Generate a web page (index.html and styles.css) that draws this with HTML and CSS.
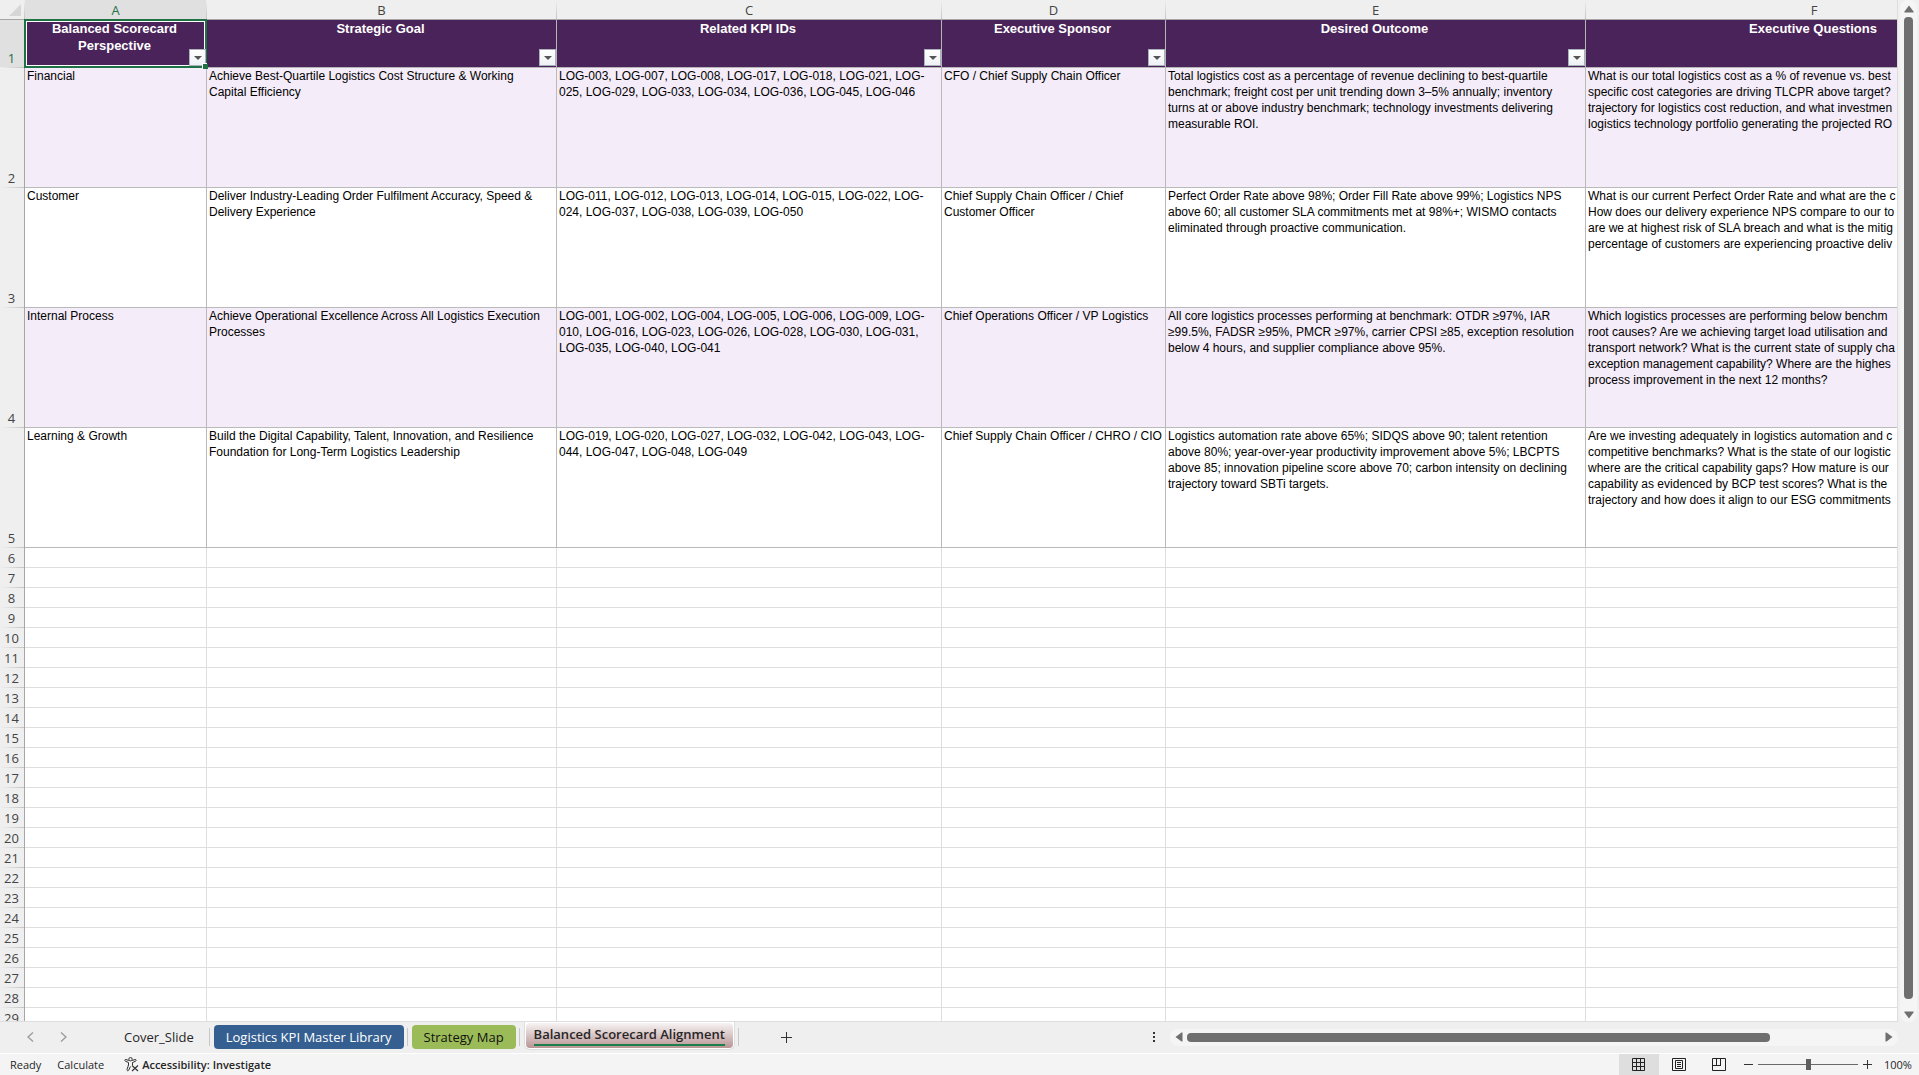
FILE: index.html
```html
<!DOCTYPE html>
<html lang="en">
<head>
    <meta charset="UTF-8">
    <meta name="viewport" content="width=device-width, initial-scale=1.0">
    <title>Balanced Scorecard Alignment</title>
    <link rel="stylesheet" href="styles.css">
</head>
<body>
    <main class="workspace">
        <div class="grid">
            <table class="sheet">
                <colgroup>
                    <col class="col-num">
                    <col class="col-a">
                    <col class="col-b">
                    <col class="col-c">
                    <col class="col-d">
                    <col class="col-e">
                    <col class="col-f">
                </colgroup>
                <thead>
                    <tr class="letters">
                        <th class="corner"><svg width="12" height="12" viewBox="0 0 12 12"><path d="M12 0v12H0z" fill="#d6d6d6"/></svg></th>
                        <th class="selected">A</th>
                        <th>B</th>
                        <th>C</th>
                        <th>D</th>
                        <th>E</th>
                        <th>F</th>
                    </tr>
                </thead>
                <tbody id="rows">
                    <tr class="titles">
                        <th class="num selected">1</th>
                        <td class="active-cell">Balanced Scorecard<br>Perspective<button class="filter" aria-label="Filter perspective"></button><span class="handle"></span></td>
                        <td>Strategic Goal<button class="filter" aria-label="Filter goal"></button></td>
                        <td>Related KPI IDs<button class="filter" aria-label="Filter KPI IDs"></button></td>
                        <td>Executive Sponsor<button class="filter" aria-label="Filter sponsor"></button></td>
                        <td>Desired Outcome<button class="filter" aria-label="Filter outcome"></button></td>
                        <td>Executive Questions</td>
                    </tr>
                    <tr class="data tinted">
                        <th class="num">2</th>
                        <td>Financial</td>
                        <td>Achieve Best-Quartile Logistics Cost Structure &amp; Working<br>Capital Efficiency</td>
                        <td>LOG-003, LOG-007, LOG-008, LOG-017, LOG-018, LOG-021, LOG-<br>025, LOG-029, LOG-033, LOG-034, LOG-036, LOG-045, LOG-046</td>
                        <td>CFO / Chief Supply Chain Officer</td>
                        <td>Total logistics cost as a percentage of revenue declining to best-quartile<br>benchmark; freight cost per unit trending down 3–5% annually; inventory<br>turns at or above industry benchmark; technology investments delivering<br>measurable ROI.</td>
                        <td>What is our total logistics cost as a % of revenue vs. best<br>specific cost categories are driving TLCPR above target?<br>trajectory for logistics cost reduction, and what investmen<br>logistics technology portfolio generating the projected RO</td>
                    </tr>
                    <tr class="data">
                        <th class="num">3</th>
                        <td>Customer</td>
                        <td>Deliver Industry-Leading Order Fulfilment Accuracy, Speed &amp;<br>Delivery Experience</td>
                        <td>LOG-011, LOG-012, LOG-013, LOG-014, LOG-015, LOG-022, LOG-<br>024, LOG-037, LOG-038, LOG-039, LOG-050</td>
                        <td>Chief Supply Chain Officer / Chief<br>Customer Officer</td>
                        <td>Perfect Order Rate above 98%; Order Fill Rate above 99%; Logistics NPS<br>above 60; all customer SLA commitments met at 98%+; WISMO contacts<br>eliminated through proactive communication.</td>
                        <td>What is our current Perfect Order Rate and what are the c<br>How does our delivery experience NPS compare to our to<br>are we at highest risk of SLA breach and what is the mitig<br>percentage of customers are experiencing proactive deliv</td>
                    </tr>
                    <tr class="data tinted">
                        <th class="num">4</th>
                        <td>Internal Process</td>
                        <td>Achieve Operational Excellence Across All Logistics Execution<br>Processes</td>
                        <td>LOG-001, LOG-002, LOG-004, LOG-005, LOG-006, LOG-009, LOG-<br>010, LOG-016, LOG-023, LOG-026, LOG-028, LOG-030, LOG-031,<br>LOG-035, LOG-040, LOG-041</td>
                        <td>Chief Operations Officer / VP Logistics</td>
                        <td>All core logistics processes performing at benchmark: OTDR ≥97%, IAR<br>≥99.5%, FADSR ≥95%, PMCR ≥97%, carrier CPSI ≥85, exception resolution<br>below 4 hours, and supplier compliance above 95%.</td>
                        <td>Which logistics processes are performing below benchm<br>root causes? Are we achieving target load utilisation and<br>transport network? What is the current state of supply cha<br>exception management capability? Where are the highes<br>process improvement in the next 12 months?</td>
                    </tr>
                    <tr class="data">
                        <th class="num">5</th>
                        <td>Learning &amp; Growth</td>
                        <td>Build the Digital Capability, Talent, Innovation, and Resilience<br>Foundation for Long-Term Logistics Leadership</td>
                        <td>LOG-019, LOG-020, LOG-027, LOG-032, LOG-042, LOG-043, LOG-<br>044, LOG-047, LOG-048, LOG-049</td>
                        <td>Chief Supply Chain Officer / CHRO / CIO</td>
                        <td>Logistics automation rate above 65%; SIDQS above 90; talent retention<br>above 80%; year-over-year productivity improvement above 5%; LBCPTS<br>above 85; innovation pipeline score above 70; carbon intensity on declining<br>trajectory toward SBTi targets.</td>
                        <td>Are we investing adequately in logistics automation and c<br>competitive benchmarks? What is the state of our logistic<br>where are the critical capability gaps? How mature is our<br>capability as evidenced by BCP test scores? What is the<br>trajectory and how does it align to our ESG commitments</td>
                    </tr>
                </tbody>
            </table>
        </div>
        <div class="vscroll">
            <button class="arrow" aria-label="Scroll up"><svg width="10" height="8" viewBox="0 0 10 8"><path d="M5 0.500L9.500 6.500V7.500H0.500V6.500z" fill="#6f6f6f"/></svg></button>
            <div class="thumb"></div>
            <button class="arrow" aria-label="Scroll down"><svg width="10" height="8" viewBox="0 0 10 8"><path d="M5 7.500L9.500 1.500V0.500H0.500V1.500z" fill="#6f6f6f"/></svg></button>
        </div>
    </main>

    <nav class="tabbar">
        <div class="tab-nav">
            <button aria-label="Previous sheet"><svg width="7" height="10" viewBox="0 0 7 10"><path d="M6 0.500L1 5l5 4.500" fill="none" stroke="#999" stroke-width="1.300"/></svg></button>
            <button aria-label="Next sheet"><svg width="7" height="10" viewBox="0 0 7 10"><path d="M1 0.500L6 5l-5 4.500" fill="none" stroke="#999" stroke-width="1.300"/></svg></button>
        </div>
        <button class="tab cover">Cover_Slide</button>
        <span class="sep"></span>
        <button class="tab library">Logistics KPI Master Library</button>
        <span class="sep"></span>
        <button class="tab strategy">Strategy Map</button>
        <span class="sep"></span>
        <div class="tab-current">
            <button class="tab alignment"><span>Balanced Scorecard Alignment</span></button>
        </div>
        <span class="sep"></span>
        <button class="add" aria-label="New sheet"><svg width="11" height="11" viewBox="0 0 11 11"><path d="M5.500 0v11M0 5.500h11" stroke="#333"/></svg></button>
        <button class="more" aria-label="Resize tabs"><svg width="2" height="10" viewBox="0 0 2 10"><path d="M0 0h2v2H0zM0 4h2v2H0zM0 8h2v2H0z" fill="#333"/></svg></button>
        <div class="hscroll">
            <button class="arrow" aria-label="Scroll left"><svg width="8" height="10" viewBox="0 0 8 10"><path d="M0.500 5L6.500 0.500H7.500V9.500H6.500z" fill="#6f6f6f"/></svg></button>
            <div class="track"><div class="thumb"></div></div>
            <button class="arrow" aria-label="Scroll right"><svg width="8" height="10" viewBox="0 0 8 10"><path d="M7.500 5L1.500 0.500H0.500V9.500H1.500z" fill="#6f6f6f"/></svg></button>
        </div>
    </nav>

    <footer class="status">
        <span class="ready">Ready</span>
        <span class="calc">Calculate</span>
        <button class="access">
            <svg width="15" height="15" viewBox="0 0 15 15" fill="none" stroke="#333"><circle cx="6.500" cy="2.200" r="1.700"/><path d="M4.800 3.500L2 2.500C0.800 2.200 0.300 3.700 1.400 4.200L4.500 5.500V8L3 12.500C2.700 13.800 4.200 14.300 4.700 13.200L6.500 9.500M8.200 3.500L11 2.500C12.200 2.200 12.700 3.700 11.600 4.200L8.500 5.500V8"/><path d="M8 8.500l6 5.500M14 8.500L8 14" stroke-width="1.200"/></svg>
            Accessibility: Investigate
        </button>
        <div class="views">
            <button class="on" aria-label="Normal view"><svg width="14" height="14" viewBox="0 0 14 14" fill="none" stroke="#222"><path d="M0.500 0.500h12v12h-12zM4.500 0v13M8.500 0v13M0 4.500h13M0 8.500h13"/></svg></button>
            <button aria-label="Page layout"><svg width="14" height="14" viewBox="0 0 14 14" fill="none" stroke="#222"><path d="M0.500 0.500h13v12h-13zM3.500 2.500h7v8h-7zM5 4.500h4M5 6.500h4M5 8.500h4"/></svg></button>
            <button aria-label="Page break preview"><svg width="14" height="14" viewBox="0 0 14 14" fill="none" stroke="#222"><path d="M0.500 0.500h13v12h-13zM0 7.500h9M4.500 0v7M8.500 0v8"/></svg></button>
        </div>
        <button class="zoom-btn" aria-label="Zoom out"><svg width="9" height="9" viewBox="0 0 9 9"><path d="M0 4.500h9" stroke="#333"/></svg></button>
        <input class="zoom" type="range" min="0" max="100" value="50" aria-label="Zoom">
        <button class="zoom-btn" aria-label="Zoom in"><svg width="9" height="9" viewBox="0 0 9 9"><path d="M0 4.500h9M4.500 0v9" stroke="#333"/></svg></button>
        <span class="percent">100%</span>
    </footer>

    <script src="script.js"></script>
</body>
</html>
```

FILE: styles.css
```css
* {
    margin: 0;
    padding: 0;
    box-sizing: border-box;
}

body {
    height: 100vh;
    display: flex;
    flex-direction: column;
    overflow: hidden;
    background: #efefef;
    color: #262626;
    font-family: "Open Sans", "Noto Sans", sans-serif;
    font-size: 11px;
}

button {
    border: none;
    background: none;
    color: inherit;
    font: inherit;
    display: flex;
    align-items: center;
    justify-content: center;
}

svg {
    display: block;
}

/* Sheet */
.workspace {
    flex: 1;
    min-height: 0;
    display: flex;
}

.grid {
    flex: 1;
    min-width: 0;
    overflow: hidden;
    background: #fff;
    border-right: 1px solid #dedede;
    border-bottom: 1px solid #dedede;
}

.sheet {
    width: 2043px;
    table-layout: fixed;
    border-collapse: separate;
    border-spacing: 0;
}

.col-num { width: 25px; }
.col-a { width: 182px; }
.col-b { width: 350px; }
.col-c { width: 385px; }
.col-d { width: 224px; }
.col-e { width: 420px; }
.col-f { width: 457px; }

.letters th {
    height: 20px;
    padding-right: 1px;
    background: linear-gradient(to bottom, #efefef, #c4c4c4) right / 1px 100% no-repeat #efefef;
    border-bottom: 1px solid #a6a6a6;
    font-size: 13px;
    line-height: 18px;
    font-weight: 400;
    color: #444;
}

.letters .corner {
    padding-left: 9px;
}

.letters .selected,
.num.selected {
    background-color: #e0e0e0;
    color: #1e7145;
}

.num {
    height: 20px;
    padding: 0 1px 1px 0;
    vertical-align: bottom;
    background: linear-gradient(to right, #efefef, #c4c4c4) bottom / 100% 1px no-repeat #efefef;
    border-right: 1px solid #a6a6a6;
    font-size: 13px;
    line-height: 18px;
    font-weight: 400;
    color: #444;
}

.sheet td {
    border-right: 1px solid #dedede;
    border-bottom: 1px solid #dedede;
}

.titles td {
    position: relative;
    height: 48px;
    padding-right: 2px;
    vertical-align: top;
    background: #4a235a;
    border-color: #b5b5b5;
    color: #fff;
    text-align: center;
    font: bold 13px/17px "Liberation Sans", Arial, sans-serif;
}

.filter {
    position: absolute;
    right: 0;
    bottom: 1px;
    width: 17px;
    height: 17px;
    background: linear-gradient(#fff, #eef1f5);
    border: 1px solid #a9b1bb;
}

.filter::after {
    content: "";
    border: 4px solid transparent;
    border-top-color: #555;
    border-bottom: none;
}

/* Selection outline lies over the cell edges */
.active-cell::after {
    content: "";
    position: absolute;
    inset: -1px;
    border: 2px solid #1e7145;
    box-shadow: inset 0 0 0 1px #fff;
}

.active-cell .filter {
    z-index: 1;
}

.handle {
    position: absolute;
    right: -2px;
    bottom: -2px;
    z-index: 2;
    width: 5px;
    height: 5px;
    background: #1e7145;
    box-shadow: -1px -1px 0 #fff;
}

.data td {
    height: 120px;
    padding: 0 2px;
    vertical-align: top;
    white-space: nowrap;
    border-color: #bababa;
    color: #000;
    font: 12px/16px "Liberation Sans", Arial, sans-serif;
}

.tinted td {
    background: #f4ecf8;
}

/* Scrollbars */
.vscroll {
    width: 17px;
    margin: 0 2px;
    padding: 5px 0 3px;
    display: flex;
    flex-direction: column;
    align-items: center;
    gap: 4px;
    background: #f5f5f5;
    border-radius: 8px;
}

.vscroll .thumb {
    flex: 1;
    width: 9px;
    margin-bottom: 8px;
    background: #6f6f6f;
    border-radius: 4px;
}

.hscroll {
    width: 728px;
    height: 17px;
    padding: 0 5px;
    margin-right: 21px;
    display: flex;
    align-items: center;
    gap: 4px;
    background: #f5f5f5;
    border-radius: 8px;
}

.hscroll .track {
    flex: 1;
}

.hscroll .thumb {
    width: 84%;
    height: 9px;
    background: #6f6f6f;
    border-radius: 4px;
}

/* Sheet tabs */
.tabbar {
    height: 31px;
    padding-bottom: 1px;
    display: flex;
    align-items: center;
    font-size: 13px;
}

.tab-nav {
    display: flex;
    gap: 26px;
    margin: 0 45px 0 27px;
}

.tab {
    height: 24px;
    padding: 0 12px;
    border-radius: 4px;
    white-space: nowrap;
}

.sep {
    width: 1px;
    height: 18px;
    margin: 0 4px 0 3px;
    background: #c8c8c8;
}

.library {
    background: #365f91;
    color: #fff;
}

.strategy {
    background: #9bbb59;
    color: #111;
}

.tab-current {
    align-self: flex-start;
    height: 28px;
    padding: 1px;
    background: #fff;
    border: 1px solid #dedede;
    border-top: none;
    border-radius: 0 0 6px 6px;
}

.alignment {
    height: 25px;
    padding: 0 8px;
    background: linear-gradient(#f7f3f3, #b99595);
    font-weight: 600;
}

.alignment span {
    height: 21px;
    line-height: 19px;
    border-bottom: 2px solid #1a7f4b;
}

.add {
    margin-left: 38px;
}

.more {
    margin: 0 15px 0 auto;
}

/* Status bar */
.status {
    height: 22px;
    display: flex;
    align-items: center;
    background: #f4f4f4;
    border-top: 1px solid #fff;
}

.ready {
    margin-left: 10px;
}

.calc {
    margin: 0 20px 0 16px;
}

.access {
    gap: 3px;
    font-weight: 600;
}

.views {
    display: flex;
    margin-left: auto;
}

.views button {
    width: 40px;
    height: 21px;
}

.views .on {
    background: #dedede;
}

.zoom-btn {
    margin: 0 5px;
}

.zoom {
    appearance: none;
    width: 100px;
    height: 11px;
    background: linear-gradient(#6a6a6a, #6a6a6a) center / 100% 1px no-repeat;
}

.zoom::-webkit-slider-thumb {
    appearance: none;
    width: 5px;
    height: 11px;
    background: #5f5f5f;
}

.percent {
    width: 27px;
    margin: 0 8px 0 7px;
}
```

FILE: script.js
```javascript
// Fill the rest of the sheet with empty rows
const rows = document.getElementById('rows');

for (let n = 6; n <= 29; n++) {
    const row = document.createElement('tr');
    row.innerHTML = `<th class="num">${n}</th>` + '<td></td>'.repeat(6);
    rows.appendChild(row);
}
```
